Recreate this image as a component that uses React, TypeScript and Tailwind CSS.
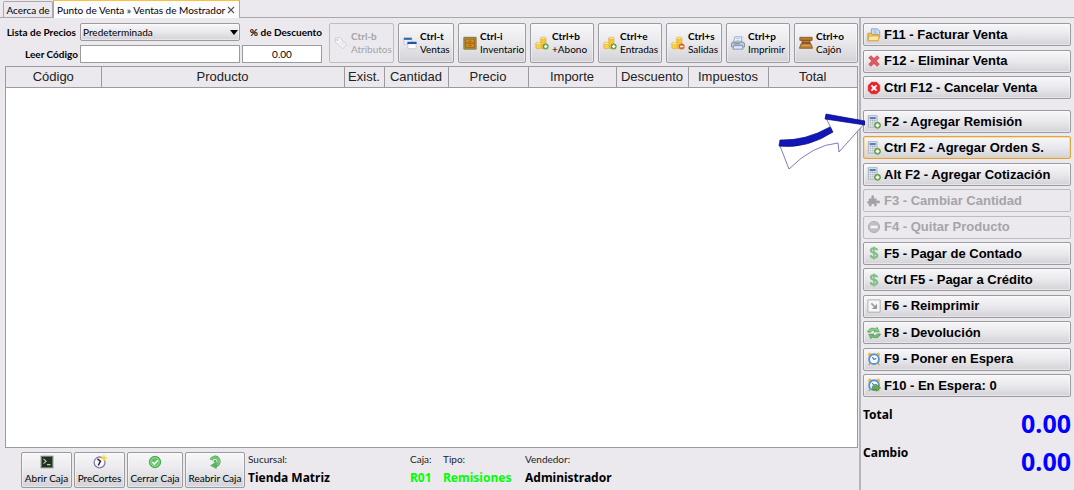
import type { ReactNode } from "react";

const face =
  "rounded-[2px] border border-[#9b9a9e] bg-linear-to-b from-[#f7f6f8] via-[#e9e8ec] to-[#d3d2d6] text-black shadow-[inset_0_0_0_1px_rgba(255,255,255,0.45)]";
const faceFocus =
  "rounded-[2px] border border-[#dba544] bg-linear-to-b from-[#f7f6f8] via-[#e9e8ec] to-[#d3d2d6] text-black shadow-[inset_0_0_0_1px_rgba(250,205,120,0.6)]";
const faceOff = "rounded-[2px] border border-[#bdbcc0] bg-[#ebe9ed] text-[#a5a4a8]";

function Svg({ children, className = "size-[14px]" }: { children: ReactNode; className?: string }) {
  return (
    <svg viewBox="0 0 16 16" className={`${className} shrink-0`} fill="none" aria-hidden="true">
      {children}
    </svg>
  );
}

const TagIcon = () => (
  <Svg>
    <path d="M1.5 2.5 6 1.5l8.5 8-4.5 5L1.5 7z" fill="#f6f5f7" stroke="#c9c8cc" />
    <circle cx="4" cy="4.5" r="1.1" fill="#c4c3c7" />
    <path d="m6.5 7 4 4M8.5 5.8l3.5 3.4" stroke="#d0cfd3" />
  </Svg>
);

const WindowsIcon = () => (
  <Svg>
    <path d="M1 2.5h9v7H1z" fill="#eef2f8" stroke="#c3c8d0" />
    <path d="M1 2h9v2.4H1z" fill="#3465a4" />
    <path d="M5.5 7.5h9.500v7H5.500z" fill="#fbfcfe" stroke="#c3c8d0" />
    <path d="M5 6.600h10.500V9.200H5z" fill="#2456a0" />
  </Svg>
);

const DrawerIcon = () => (
  <Svg>
    <path d="M1 1.500h14v13.500H1z" fill="#a9975a" stroke="#7d6a2c" />
    <path d="M3 3.500h10v9.500H3z" fill="#d98a1c" stroke="#8a5a10" strokeWidth=".8" />
    <path d="M3 8.200h10" stroke="#8a5a10" strokeWidth="1" />
    <path d="M6.300 6h3.400M6.300 10.700h3.400" stroke="#8a5a10" strokeWidth="1" />
  </Svg>
);

const CoinsIcon = ({ badge, plus }: { badge: string; plus?: boolean }) => (
  <Svg>
    <path d="M6.500 2.500v11c0 1.300 6 1.300 6 0v-11z" fill="#f5c63c" stroke="#dba822" strokeWidth=".7" />
    <ellipse cx="9.500" cy="2.600" rx="3" ry="1.400" fill="#fde68a" stroke="#dba822" strokeWidth=".6" />
    <path d="M1 8.500v5c0 1.500 6 1.500 6 0v-5z" fill="#f8d050" stroke="#dba822" strokeWidth=".7" />
    <ellipse cx="4" cy="8.500" rx="3" ry="1.400" fill="#fdeb9c" stroke="#dba822" strokeWidth=".6" />
    <circle cx="12.200" cy="12" r="3.400" fill={badge} />
    <path d={plus ? "M10.300 12h3.800M12.200 10.100v3.800" : "M10.300 12h3.800"} stroke="#fff" strokeWidth="1.600" />
  </Svg>
);

const PrinterIcon = () => (
  <Svg>
    <path d="M4.500 1h8l-.5 6H3z" fill="#f4f8fd" stroke="#86a3c8" />
    <path d="M5.500 3h5M5.200 5h5.600" stroke="#a9c4e4" />
    <path d="M1.500 7h13l1 2v3.500H.5V9z" fill="#c4cad3" stroke="#7e8794" />
    <path d="M3 11h10l.8 4H2.200z" fill="#dce9f8" stroke="#6f91bd" />
    <path d="M3 9h7" stroke="#6e7784" />
  </Svg>
);

const RegisterIcon = () => (
  <Svg>
    <path d="M1 1.500h14v3.500H1z" fill="#b87631" stroke="#8d5a22" />
    <path d="M3 5h10v4H3z" fill="#7c4714" />
    <path d="M4 6.500h8" stroke="#d49a55" />
    <path d="M2.500 8.500h11L15.500 14H.500z" fill="#bf7d38" stroke="#8d5a22" />
    <path d="M3 11h10" stroke="#e0ae6e" />
  </Svg>
);

const FolderIcon = () => (
  <Svg>
    <path d="M5 1h7l2.500 2.500V11H5z" fill="#cfe3f8" stroke="#6f9fd2" />
    <path d="M7 3.500h4M7 5.500h5" stroke="#8fb5df" />
    <path d="M1 6h4l1 1.500h7v7H1z" fill="#f3c55d" stroke="#c79633" />
    <path d="M1 14.500 2.500 9H14l-1 5.500z" fill="#fde3a0" stroke="#d3a545" />
  </Svg>
);

const DeleteIcon = () => (
  <Svg>
    <path
      d="M2 4.300 4.500 2 8 5.200 11.500 2 14 4.300 10.600 8l3.400 3.700-2.500 2.300L8 10.800 4.500 14 2 11.700 5.400 8z"
      fill="#dd5a5f"
      stroke="#cf4047"
      strokeWidth=".8"
    />
  </Svg>
);

const CancelIcon = () => (
  <Svg>
    <path d="M5 1.500h6L14.500 5v6L11 14.500H5L1.500 11V5z" fill="#ee2329" stroke="#e0262b" strokeLinejoin="round" />
    <path d="m5 5 6 6m0-6-6 6" stroke="#fff" strokeWidth="2.200" />
  </Svg>
);

const CalcAddIcon = () => (
  <Svg>
    <path d="M1.500.800h10v13h-10z" fill="#e4e7ec" stroke="#a3abb6" />
    <path d="M3 2.300h7v2.500H3z" fill="#4f83c8" />
    <path d="M3.200 6.500h6.800M3.200 8.800h6.800M3.200 11.100h6.800" stroke="#a4adba" strokeWidth="1.300" strokeDasharray="1.700 .8" />
    <circle cx="12" cy="11.800" r="3.500" fill="#62a441" stroke="#4c8a30" strokeWidth=".6" />
    <path d="M9.900 11.800h4.200M12 9.700v4.200" stroke="#fff" strokeWidth="1.900" />
  </Svg>
);

const PuzzleIcon = () => (
  <Svg>
    <path
      d="M2 5h3.400C4.300 2.500 5.200 1.500 6.500 1.500S8.800 2.500 7.700 5H11v3c2.400-1.200 3.800-.3 3.800 1.200S13.400 11.500 11 10.400V14H8c.8-2-.1-2.700-1.300-2.700S4.500 12 5.300 14H2v-3.200c-1.300.6-1.700-.3-1.700-1.300S.8 7.700 2 8.300z"
      fill="#a3a2a6"
    />
  </Svg>
);

const MinusIcon = () => (
  <Svg>
    <circle cx="8" cy="8" r="6.400" fill="#bfbec2" stroke="#a9a8ac" />
    <path d="M4 6.500h8v3H4z" fill="#f4f3f5" />
  </Svg>
);

const DollarIcon = () => (
  <Svg>
    <path d="M8 .5v15" stroke="#83bf88" strokeWidth="1.800" />
    <path
      d="M11.600 5C11.300 3.400 10 2.700 8 2.700S4.500 3.600 4.500 5.200C4.500 8.700 11.700 7 11.700 10.700c0 1.700-1.600 2.600-3.700 2.600s-3.500-.9-3.800-2.700"
      stroke="#83bf88"
      strokeWidth="2.500"
    />
  </Svg>
);

const ReprintIcon = () => (
  <Svg>
    <path d="M1 1h14v14H1z" fill="#f6f6f7" stroke="#a7a7aa" />
    <path d="m5 5 5 5" stroke="#98989c" strokeWidth="1.700" />
    <path d="M11.500 5.500v6h-6z" fill="#98989c" />
  </Svg>
);

const RefreshIcon = () => (
  <Svg>
    <path d="M.8 7C1.500 3 6 1.500 10 3.300L11.500 1.500 14 6.500 8 6.800l1.200-1.500C7 4.600 5 5 4.200 7z" fill="#8ccf86" stroke="#3f8c45" strokeWidth=".7" />
    <path d="M15.200 9c-.7 4-5.200 5.500-9.200 3.700l-1.500 1.800L2 9.500l6-.3-1.200 1.500c2.200.7 4.200.3 5-1.700z" fill="#74bd72" stroke="#3f8c45" strokeWidth=".7" />
  </Svg>
);

const ClockIcon = ({ arrow }: { arrow?: boolean }) => (
  <Svg>
    <circle cx="3.300" cy="3" r="2.300" fill="#f3bd4c" />
    <circle cx="12.700" cy="3" r="2.300" fill="#f3bd4c" />
    <path d="m3.500 13-1.500 2M12.500 13l1.500 2" stroke="#d59b2e" strokeWidth="1.500" />
    <circle cx="8" cy="8.200" r="5.600" fill="#f7fbff" stroke="#5a93d1" strokeWidth="2.200" />
    <path d="M6 6l2 2.500 2.500-1" stroke="#3c5f8c" strokeWidth="1.200" />
    {arrow && <path d="M6 9.500h4.500V7.300l5 4-5 4V13H6z" fill="#64ad4e" stroke="#3d8435" strokeWidth=".7" />}
  </Svg>
);

const TerminalIcon = () => (
  <Svg>
    <path d="M1.500 1.500h13v13h-13z" fill="#22301f" stroke="#707a6d" strokeWidth="1.500" />
    <path d="m4 4.500 3 2.700-3 2.700M8 11h4" stroke="#b9cdb2" strokeWidth="1.300" />
  </Svg>
);

const TimerIcon = () => (
  <Svg>
    <circle cx="7.500" cy="8.500" r="6.200" fill="#fbf9fd" stroke="#8c7aa6" strokeWidth="1.500" />
    <path d="M5 4.500 8.500 7 6 12" stroke="#2e2936" strokeWidth="1.700" />
    <path d="m12.500.3.900 2.300 2.400.9-2.400.9-.9 2.300-.9-2.300-2.400-.9 2.400-.9z" fill="#fbd72b" stroke="#f8da3a" strokeWidth="1" />
  </Svg>
);

const CheckIcon = () => (
  <Svg>
    <circle cx="8" cy="8" r="6.500" fill="#5cc15d" stroke="#3ba345" />
    <circle cx="8" cy="8" r="4.800" stroke="#a8e2a4" />
    <path d="m5 8 2.300 2.300 4-4.300" stroke="#fff" strokeWidth="1.900" />
  </Svg>
);

const ReopenIcon = () => (
  <Svg>
    <path d="M3.500 5.500A4.800 4.800 0 1 1 9 12" stroke="#419c4b" strokeWidth="3.600" />
    <path d="M3.500 5.500A4.800 4.800 0 1 1 9 12" stroke="#7bcb7d" strokeWidth="2.400" />
    <path d="M9.500 8v7.500L3 12z" fill="#5fb463" stroke="#419c4b" strokeWidth=".6" />
    <circle cx="8" cy="7" r="1.600" fill="#5fb463" />
  </Svg>
);

const shortcuts = [
  { key: "Ctrl-b", label: "Atributos", icon: <TagIcon />, off: true, w: "w-[65px]" },
  { key: "Ctrl-t", label: "Ventas", icon: <WindowsIcon />, w: "w-[56px]" },
  { key: "Ctrl-i", label: "Inventario", icon: <DrawerIcon />, w: "w-[68px]" },
  { key: "Ctrl+b", label: "+Abono", icon: <CoinsIcon badge="#5c9e3f" plus />, w: "w-[64px]" },
  { key: "Ctrl+e", label: "Entradas", icon: <CoinsIcon badge="#5c9e3f" plus />, w: "w-[64px]" },
  { key: "Ctrl+s", label: "Salidas", icon: <CoinsIcon badge="#e2622a" />, w: "w-[56px]" },
  { key: "Ctrl+p", label: "Imprimir", icon: <PrinterIcon />, w: "w-[64px]" },
  { key: "Ctrl+o", label: "Cajón", icon: <RegisterIcon />, w: "w-[64px]" },
];

const columns = [
  { name: "Código", w: "w-[95px]" },
  { name: "Producto", w: "" },
  { name: "Exist.", w: "w-[40px]" },
  { name: "Cantidad", w: "w-[64px]" },
  { name: "Precio", w: "w-[80px]" },
  { name: "Importe", w: "w-[88px]" },
  { name: "Descuento", w: "w-[72px]" },
  { name: "Impuestos", w: "w-[80px]" },
  { name: "Total", w: "w-[89px]" },
];

type Action = { label: string; icon: ReactNode; off?: boolean; focus?: boolean };

const saleActions: Action[] = [
  { label: "F11 - Facturar Venta", icon: <FolderIcon /> },
  { label: "F12 - Eliminar Venta", icon: <DeleteIcon /> },
  { label: "Ctrl F12 - Cancelar Venta", icon: <CancelIcon /> },
];

const documentActions: Action[] = [
  { label: "F2 - Agregar Remisión", icon: <CalcAddIcon /> },
  { label: "Ctrl F2 - Agregar Orden S.", icon: <CalcAddIcon />, focus: true },
  { label: "Alt F2 - Agregar Cotización", icon: <CalcAddIcon /> },
  { label: "F3 - Cambiar Cantidad", icon: <PuzzleIcon />, off: true },
  { label: "F4 - Quitar Producto", icon: <MinusIcon />, off: true },
  { label: "F5 - Pagar de Contado", icon: <DollarIcon /> },
  { label: "Ctrl F5 - Pagar a Crédito", icon: <DollarIcon /> },
  { label: "F6 - Reimprimir", icon: <ReprintIcon /> },
  { label: "F8 - Devolución", icon: <RefreshIcon /> },
  { label: "F9 - Poner en Espera", icon: <ClockIcon /> },
  { label: "F10 - En Espera: 0", icon: <ClockIcon arrow /> },
];

const drawerActions = [
  { label: "Abrir Caja", icon: <TerminalIcon />, w: "w-[51px]" },
  { label: "PreCortes", icon: <TimerIcon />, w: "w-[51px]" },
  { label: "Cerrar Caja", icon: <CheckIcon />, w: "w-[56px]" },
  { label: "Reabrir Caja", icon: <ReopenIcon />, w: "w-[60px]" },
];

function ActionButton({ label, icon, off, focus }: Action) {
  return (
    <button
      type="button"
      disabled={off}
      className={`flex h-[23px] w-full shrink-0 items-center gap-[3px] pl-[3px] text-left font-['Liberation_Sans',Arial,sans-serif] text-[13px] font-bold whitespace-nowrap ${off ? faceOff : focus ? faceFocus : face}`}
    >
      {icon}
      {label}
    </button>
  );
}

function Info({ label, value, green, w }: { label: string; value: string; green?: boolean; w: string }) {
  return (
    <div className={`shrink-0 whitespace-nowrap ${w}`}>
      <dt className="text-[10px] leading-[14px] text-[#222]">{label}</dt>
      <dd
        className={`mt-[3px] font-['Noto_Sans','Open_Sans',sans-serif] text-xs leading-[18px] font-bold ${green ? "text-[#00ff00]" : "text-black"}`}
      >
        {value}
      </dd>
    </div>
  );
}

export default function App() {
  return (
    <div className="flex h-screen flex-col overflow-hidden bg-[#ebe9ed] font-['Lato','Open_Sans',sans-serif] text-[10px] text-black">
      <nav className="flex h-[18px] shrink-0 items-end border-b border-[#a9a8ac] pl-[3px]">
        <button type="button" className="h-4 w-[50px] rounded-t-[2px] border border-b-0 border-[#a9a8ac] leading-[14px] whitespace-nowrap">
          Acerca de
        </button>
        <div className="-mb-px flex h-[19px] w-[187px] items-center justify-between border-x border-t-2 border-x-[#a9a8ac] border-t-[#fcc13c] bg-[#fcfbfd] pr-1 pl-[3px]">
          <button type="button" className="leading-[14px] whitespace-nowrap">Punto de Venta » Ventas de Mostrador</button>
          <button type="button" aria-label="Cerrar pestaña">
            <svg viewBox="0 0 8 8" className="size-2" aria-hidden="true">
              <path d="m1 1 6 6m0-6L1 7" stroke="#555" strokeWidth="1.100" />
            </svg>
          </button>
        </div>
      </nav>

      <div className="flex min-h-0 flex-1">
        <main className="flex min-w-0 flex-1 flex-col pt-[5px] pl-[5px]">
          <div className="flex h-10 shrink-0 justify-between">
            <div className="grid grid-cols-[73px_160px_80px] grid-rows-[18px_18px] content-between items-center gap-x-[2px]">
              <label htmlFor="precios" className="pr-[2px] text-right font-bold whitespace-nowrap">Lista de Precios</label>
              <div className="relative h-full">
                <select id="precios" className={`h-full w-full appearance-none pl-[2px] ${face}`}>
                  <option>Predeterminada</option>
                </select>
                <svg viewBox="0 0 8 5" className="pointer-events-none absolute top-[7px] right-[2px] h-[5px] w-2" aria-hidden="true">
                  <path d="M0 0h8L4 5z" fill="#000" />
                </svg>
              </div>
              <label htmlFor="descuento" className="text-right font-bold whitespace-nowrap">% de Descuento</label>
              <label htmlFor="codigo" className="text-right font-bold whitespace-nowrap">Leer Código</label>
              <input id="codigo" className="h-full w-full border border-[#9b9a9e] bg-white px-1" />
              <input id="descuento" defaultValue="0.00" className="h-full w-full border border-[#9b9a9e] bg-white text-center" />
            </div>
            <div className="flex gap-1">
              {shortcuts.map((s) => (
                <button
                  key={s.key}
                  type="button"
                  disabled={s.off}
                  className={`flex items-center gap-[3px] pl-1 text-left leading-[13px] whitespace-nowrap ${s.w} ${s.off ? faceOff : face}`}
                >
                  {s.icon}
                  <span>
                    <b className="block">{s.key}</b>
                    {s.label}
                  </span>
                </button>
              ))}
            </div>
          </div>

          <div className="mt-[3px] min-h-0 flex-1 border border-[#9b9a9e] bg-white">
            <table className="w-full table-fixed border-collapse">
              <thead>
                <tr className="h-5 border-b border-[#9b9a9e] bg-[#ebe9ed]">
                  {columns.map((c) => (
                    <th
                      key={c.name}
                      scope="col"
                      className={`border-r border-[#9b9a9e] p-0 pt-px text-center font-['Liberation_Sans',Arial,sans-serif] text-[13px] leading-[18px] font-normal whitespace-nowrap text-[#222] last:border-r-0 ${c.w}`}
                    >
                      {c.name}
                    </th>
                  ))}
                </tr>
              </thead>
              <tbody />
            </table>
          </div>

          <footer className="flex h-[42px] shrink-0 pt-1 pl-4">
            <div className="flex h-9 gap-[2px]">
              {drawerActions.map((d) => (
                <button
                  key={d.label}
                  type="button"
                  className={`flex flex-col items-center justify-between pt-[2px] pb-[2px] leading-[14px] whitespace-nowrap ${d.w} ${face}`}
                >
                  {d.icon}
                  {d.label}
                </button>
              ))}
            </div>
            <dl className="flex pl-[3px]">
              <Info label="Sucursal:" value="Tienda Matriz" w="w-[162px]" />
              <Info label="Caja:" value="R01" green w="w-[33px]" />
              <Info label="Tipo:" value="Remisiones" green w="w-[82px]" />
              <Info label="Vendedor:" value="Administrador" w="w-[100px]" />
            </dl>
          </footer>
        </main>

        <aside className="relative ml-px flex w-[215px] shrink-0 flex-col border-l-2 border-[#b5b4b8] pt-[5px] pr-[3px] pl-[2px]">
          <div className="flex h-[76px] shrink-0 flex-col justify-between">
            {saleActions.map((a) => (
              <ActionButton key={a.label} {...a} />
            ))}
          </div>
          <div className="mt-[11px] flex min-h-0 flex-1 flex-col justify-between">
            {documentActions.map((a) => (
              <ActionButton key={a.label} {...a} />
            ))}
          </div>
          <dl className="mt-2 shrink-0 pb-[9px] font-['Noto_Sans','Open_Sans',sans-serif] text-xs font-bold">
            <div className="flex h-[38px] justify-between">
              <dt className="leading-[20px]">Total</dt>
              <dd className="text-[25px] leading-[36px] text-[#0000ff]">0.00</dd>
            </div>
            <div className="flex h-[38px] justify-between">
              <dt className="leading-[20px]">Cambio</dt>
              <dd className="text-[25px] leading-[36px] text-[#0000ff]">0.00</dd>
            </div>
          </dl>
          <svg viewBox="0 0 88 58" className="pointer-events-none absolute top-[95px] left-[-84px] h-[58px] w-[88px]" aria-hidden="true">
            <path d="M3 33 12 56Q36 32 61 30L62 39 87 11 49 5 55 17Q30 35 3 33Z" fill="#fff" stroke="#5a5cb0" strokeWidth=".8" />
            <path d="M3 27Q28 28 53 14L56 19Q30 36 2 33Z" fill="#1216b8" stroke="#080c78" strokeWidth=".7" />
            <path d="M49 1 88 8V12L48 6Z" fill="#1216b8" stroke="#080c78" strokeWidth=".7" />
          </svg>
        </aside>
      </div>
    </div>
  );
}
